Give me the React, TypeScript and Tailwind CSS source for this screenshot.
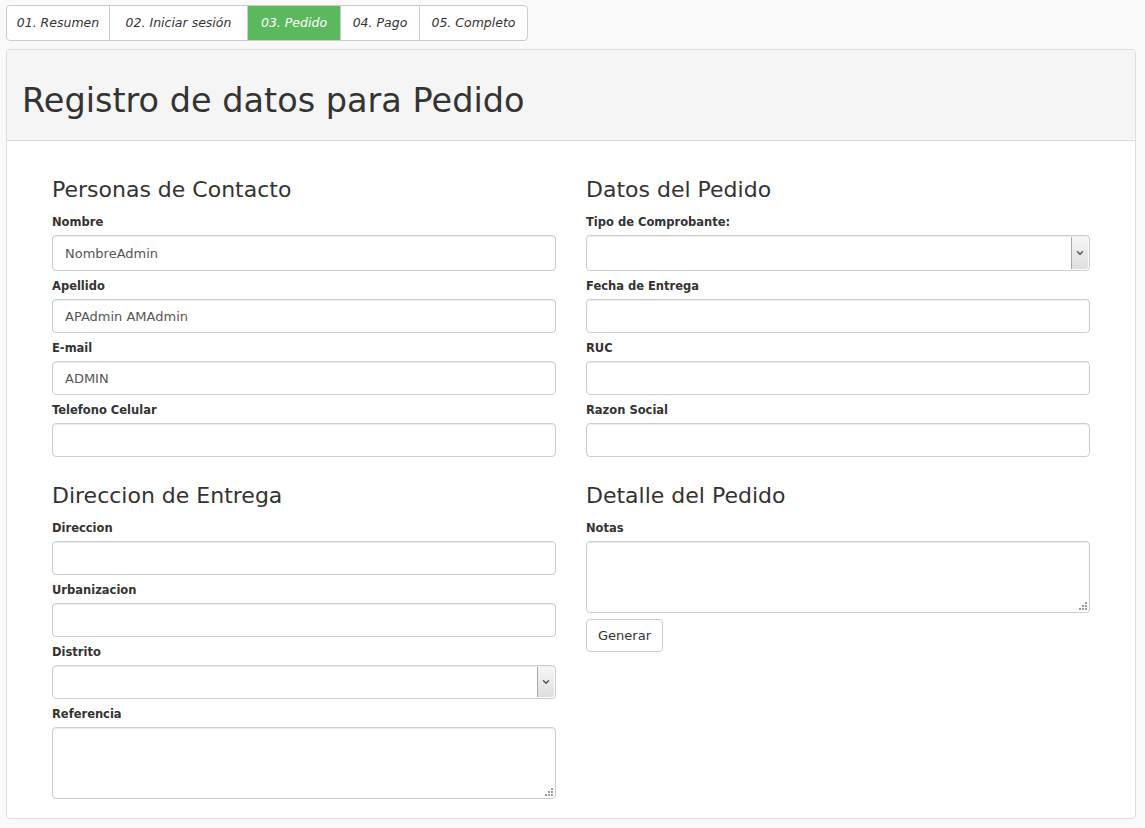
import { ChevronDown } from "lucide-react";

const steps = [
  { label: "01. Resumen", width: "w-[102px]" },
  { label: "02. Iniciar sesión", width: "w-[138px]" },
  { label: "03. Pedido", width: "w-[93px]", active: true },
  { label: "04. Pago", width: "w-[79px]" },
  { label: "05. Completo", width: "w-[108px]" },
];

const font = "font-['DejaVu_Sans',sans-serif]";

function Label({ text }: { text: string }) {
  return <label className="mb-[3px] block h-[20px] text-[11.5px] font-bold leading-[20px] text-[#333]">{text}</label>;
}

function TextInput({ label, value = "", tall = false }: { label: string; value?: string; tall?: boolean }) {
  return (
    <div className="mb-[5px]">
      <Label text={label} />
      <input
        readOnly
        value={value}
        className={`block w-full rounded-[4px] border border-[#ccc] bg-white px-[12px] pt-[1px] text-[13px] text-[#555] shadow-[inset_0_1px_1px_rgba(0,0,0,0.075)] outline-none ${font} ${tall ? "h-[36px]" : "h-[34px]"}`}
      />
    </div>
  );
}

function SelectBox({ label, tall = false }: { label: string; tall?: boolean }) {
  return (
    <div className="mb-[5px]">
      <Label text={label} />
      <div
        className={`flex w-full items-stretch rounded-[4px] border border-[#ccc] bg-white shadow-[inset_0_1px_1px_rgba(0,0,0,0.075)] ${tall ? "h-[36px]" : "h-[34px]"}`}
      >
        <div className="flex-1" />
        <div className="m-[1px] flex w-[17px] items-center justify-center rounded-r-[3px] border-l border-[#a9a9a9] bg-[linear-gradient(180deg,#f6f6f6,#dedede)]">
          <ChevronDown className="size-[10px] text-[#555]" strokeWidth={3.5} />
        </div>
      </div>
    </div>
  );
}

function Grip() {
  return (
    <svg className="absolute bottom-[3px] right-[3px]" width="8" height="8" viewBox="0 0 8 8" aria-hidden="true">
      <g fill="#9a9a9a">
        <rect x="6" y="0" width="2" height="2" />
        <rect x="3" y="3" width="2" height="2" />
        <rect x="6" y="3" width="2" height="2" />
        <rect x="0" y="6" width="2" height="2" />
        <rect x="3" y="6" width="2" height="2" />
        <rect x="6" y="6" width="2" height="2" />
      </g>
    </svg>
  );
}

function TextArea({ label }: { label: string }) {
  return (
    <div>
      <Label text={label} />
      <div className="relative">
        <textarea
          readOnly
          className="block h-[72px] w-full resize-none rounded-[4px] border border-[#ccc] bg-white shadow-[inset_0_1px_1px_rgba(0,0,0,0.075)] outline-none"
        />
        <Grip />
      </div>
    </div>
  );
}

function Heading({ text, first = false }: { text: string; first?: boolean }) {
  return (
    <h3 className={`mb-[5px] h-[34px] text-[22px] leading-[34px] text-[#333] ${first ? "" : "mt-[22px]"}`}>{text}</h3>
  );
}

export default function App() {
  return (
    <div className={`min-h-[828px] bg-[#f9f9f9] pl-[6px] pr-[9px] pt-[5px] pb-[8px] ${font}`}>
      <div className="flex w-fit rounded-[4px] border border-[#ccc] bg-white">
        {steps.map((step, index) => (
          <div
            key={step.label}
            className={`flex h-[34px] items-center justify-center text-[12.5px] italic ${step.width} ${
              step.active ? "bg-[#5cb85c] text-white" : "text-[#333]"
            } ${index > 0 ? "border-l border-[#ccc]" : ""} ${index === 0 ? "rounded-l-[3px]" : ""} ${
              index === steps.length - 1 ? "rounded-r-[3px]" : ""
            }`}
          >
            {step.label}
          </div>
        ))}
      </div>

      <div className="mt-[8px] rounded-[4px] border border-[#ddd] bg-white">
        <div className="flex h-[91px] items-center rounded-t-[3px] border-b border-[#ddd] bg-[#f5f5f5] px-[15px]">
          <h1 className="pt-[12px] text-[33.5px] text-[#333]">Registro de datos para Pedido</h1>
        </div>

        <div className="grid grid-cols-2 gap-[30px] px-[45px] pt-[32px] pb-[19px]">
          <div>
            <Heading text="Personas de Contacto" first />
            <TextInput label="Nombre" value="NombreAdmin" tall />
            <TextInput label="Apellido" value="APAdmin AMAdmin" />
            <TextInput label="E-mail" value="ADMIN" />
            <TextInput label="Telefono Celular" />

            <Heading text="Direccion de Entrega" />
            <TextInput label="Direccion" />
            <TextInput label="Urbanizacion" />
            <SelectBox label="Distrito" />
            <TextArea label="Referencia" />
          </div>

          <div>
            <Heading text="Datos del Pedido" first />
            <SelectBox label="Tipo de Comprobante:" tall />
            <TextInput label="Fecha de Entrega" />
            <TextInput label="RUC" />
            <TextInput label="Razon Social" />

            <Heading text="Detalle del Pedido" />
            <TextArea label="Notas" />
            <button
              type="button"
              className="mt-[6px] h-[33px] w-[77px] rounded-[4px] border border-[#ccc] bg-white text-[13px] text-[#333]"
            >
              Generar
            </button>
          </div>
        </div>
      </div>
    </div>
  );
}
